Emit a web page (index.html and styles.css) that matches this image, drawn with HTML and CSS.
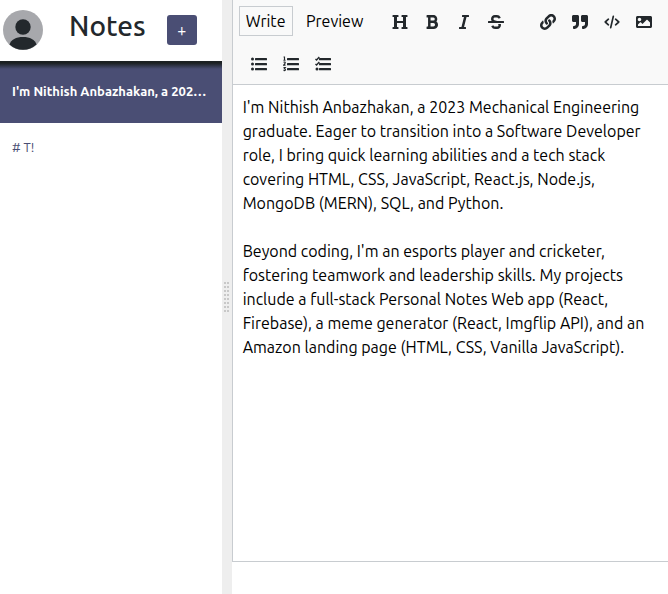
FILE: index.html
```html
<!DOCTYPE html>
<html lang="en">
<head>
<meta charset="utf-8">
<title>Notes</title>
<meta name="viewport" content="width=device-width, initial-scale=1">
<link rel="stylesheet" href="styles.css">
</head>
<body>
<main class="split">
  <section class="sidebar">
    <header class="sidebar-header">
      <svg class="avatar" viewBox="0 0 40 40" role="img" aria-label="User">
        <circle cx="20" cy="20" r="20" fill="#a7a8ac"/>
        <circle cx="20" cy="17" r="7.7" fill="#23282c"/>
        <path d="M6.5 34.5C8 29.5 13 27 20 27s12 2.500 13.500 7.500A20 20 0 0 1 6.500 34.500z" fill="#23282c"/>
      </svg>
      <h1 class="title">Notes</h1>
      <button class="new-note" type="button" aria-label="New note">+</button>
    </header>
    <nav class="notes">
      <a class="note note-selected" href="#note-1">I'm Nithish Anbazhakan, a 2023 Mechanical Engineering graduate.</a>
      <a class="note" href="#note-2"># T!</a>
    </nav>
  </section>
  <div class="gutter">
    <svg class="grip" viewBox="0 0 5 30" fill="#c8c8c8">
      <path d="M0 0h2v2H0zM3 0h2v2H3zM0 4h2v2H0zM3 4h2v2H3zM0 8h2v2H0zM3 8h2v2H3zM0 12h2v2H0zM3 12h2v2H3zM0 16h2v2H0zM3 16h2v2H3zM0 20h2v2H0zM3 20h2v2H3zM0 24h2v2H0zM3 24h2v2H3zM0 28h2v2H0zM3 28h2v2H3z"/>
    </svg>
  </div>
  <section class="editor">
    <div class="toolbar">
      <div class="tabs">
        <button class="tab tab-write tab-selected" type="button">Write</button>
        <button class="tab tab-preview" type="button">Preview</button>
      </div>
      <div class="group">
        <button class="tool" type="button" aria-label="Heading"><svg viewBox="0 0 512 512"><path d="M448 96v320h32a16 16 0 0 1 16 16v32a16 16 0 0 1-16 16H320a16 16 0 0 1-16-16v-32a16 16 0 0 1 16-16h32V288H160v128h32a16 16 0 0 1 16 16v32a16 16 0 0 1-16 16H32a16 16 0 0 1-16-16v-32a16 16 0 0 1 16-16h32V96H32a16 16 0 0 1-16-16V48a16 16 0 0 1 16-16h160a16 16 0 0 1 16 16v32a16 16 0 0 1-16 16h-32v128h192V96h-32a16 16 0 0 1-16-16V48a16 16 0 0 1 16-16h160a16 16 0 0 1 16 16v32a16 16 0 0 1-16 16z"/></svg></button>
        <button class="tool" type="button" aria-label="Bold"><svg viewBox="0 0 384 512"><path d="M333.49 238a122 122 0 0 0 27-65.21C367.87 96.49 308 32 233.42 32H34a16 16 0 0 0-16 16v48a16 16 0 0 0 16 16h31.87v288H34a16 16 0 0 0-16 16v48a16 16 0 0 0 16 16h209.32c70.8 0 134.14-51.75 141-122.4 4.74-48.45-16.39-92.06-50.83-119.6zM145.66 112h87.76a48 48 0 0 1 0 96h-87.76zm87.76 288h-87.76V288h87.76a56 56 0 0 1 0 112z"/></svg></button>
        <button class="tool" type="button" aria-label="Italic"><svg viewBox="0 0 320 512"><path d="M320 48v32a16 16 0 0 1-16 16h-62.76l-80 320H208a16 16 0 0 1 16 16v32a16 16 0 0 1-16 16H16a16 16 0 0 1-16-16v-32a16 16 0 0 1 16-16h62.76l80-320H112a16 16 0 0 1-16-16V48a16 16 0 0 1 16-16h192a16 16 0 0 1 16 16z"/></svg></button>
        <button class="tool" type="button" aria-label="Strikethrough"><svg viewBox="0 0 512 512"><path d="M496 224H293.9l-87.17-26.83A43.55 43.55 0 0 1 219.55 112h66.79A49.89 49.89 0 0 1 331 139.58a16 16 0 0 0 21.46 7.15l42.94-21.47a16 16 0 0 0 7.16-21.46l-.53-1A128 128 0 0 0 287.51 32h-68a123.68 123.68 0 0 0-123 135.64c2 20.89 10.1 39.83 21.78 56.36H16a16 16 0 0 0-16 16v32a16 16 0 0 0 16 16h480a16 16 0 0 0 16-16v-32a16 16 0 0 0-16-16zm-180.24 96A43 43 0 0 1 336 356.45 43.59 43.59 0 0 1 292.45 400h-66.79A49.89 49.89 0 0 1 181 372.42a16 16 0 0 0-21.46-7.15l-42.94 21.47a16 16 0 0 0-7.16 21.46l.53 1A128 128 0 0 0 224.49 480h68a123.68 123.68 0 0 0 123-135.64 114.25 114.25 0 0 0-5.34-24.36z"/></svg></button>
      </div>
      <div class="group">
        <button class="tool" type="button" aria-label="Link"><svg viewBox="0 0 512 512"><path d="M326.612 185.391c59.747 59.809 58.927 155.698.36 214.59-.11.12-.24.25-.36.37l-67.2 67.2c-59.27 59.27-155.699 59.262-214.96 0-59.27-59.26-59.27-155.7 0-214.96l37.106-37.106c9.84-9.84 26.786-3.3 27.294 10.606.648 17.722 3.826 35.527 9.69 52.721 1.986 5.822.567 12.262-3.783 16.612l-13.087 13.087c-28.026 28.026-28.905 73.66-1.155 101.96 28.024 28.579 74.086 28.749 102.325.51l67.2-67.19c28.191-28.191 28.073-73.757 0-101.83-3.701-3.694-7.429-6.564-10.341-8.569a16.037 16.037 0 0 1-6.947-12.606c-.396-10.567 3.348-21.456 11.698-29.806l21.054-21.055c5.521-5.521 14.182-6.199 20.584-1.731a152.482 152.482 0 0 1 20.522 17.197zM467.547 44.449c-59.261-59.262-155.69-59.27-214.96 0l-67.2 67.2c-.12.12-.25.25-.36.37-58.566 58.892-59.387 154.781.36 214.59a152.454 152.454 0 0 0 20.521 17.196c6.402 4.468 15.064 3.789 20.584-1.731l21.054-21.055c8.35-8.35 12.094-19.239 11.698-29.806a16.037 16.037 0 0 0-6.947-12.606c-2.912-2.005-6.64-4.875-10.341-8.569-28.073-28.073-28.191-73.639 0-101.83l67.2-67.19c28.239-28.239 74.3-28.069 102.325.51 27.75 28.3 26.872 73.934-1.155 101.96l-13.087 13.087c-4.35 4.35-5.769 10.79-3.783 16.612 5.864 17.194 9.042 34.999 9.69 52.721.509 13.906 17.454 20.446 27.294 10.606l37.106-37.106c59.271-59.259 59.271-155.699.001-214.959z"/></svg></button>
        <button class="tool" type="button" aria-label="Quote"><svg viewBox="0 0 512 512"><path d="M464 32H336c-26.5 0-48 21.5-48 48v128c0 26.5 21.5 48 48 48h80v64c0 35.3-28.7 64-64 64h-8c-13.3 0-24 10.7-24 24v48c0 13.3 10.7 24 24 24h8c88.4 0 160-71.6 160-160V80c0-26.5-21.5-48-48-48zm-288 0H48C21.5 32 0 53.5 0 80v128c0 26.5 21.5 48 48 48h80v64c0 35.3-28.7 64-64 64h-8c-13.3 0-24 10.7-24 24v48c0 13.3 10.7 24 24 24h8c88.4 0 160-71.6 160-160V80c0-26.5-21.5-48-48-48z"/></svg></button>
        <button class="tool" type="button" aria-label="Code"><svg viewBox="0 0 640 512"><path d="M176 144L50 256l126 112M464 144l126 112-126 112M372 30L268 482" fill="none" stroke="currentColor" stroke-width="68" stroke-linecap="round" stroke-linejoin="round"/></svg></button>
        <button class="tool" type="button" aria-label="Image"><svg viewBox="0 0 512 512"><path d="M464 448H48c-26.51 0-48-21.49-48-48V112c0-26.51 21.49-48 48-48h416c26.51 0 48 21.49 48 48v288c0 26.51-21.49 48-48 48zM112 120c-30.928 0-56 25.072-56 56s25.072 56 56 56 56-25.072 56-56-25.072-56-56-56zM64 384h384V272l-87.515-87.515c-4.686-4.686-12.284-4.686-16.971 0L208 320l-55.515-55.515c-4.686-4.686-12.284-4.686-16.971 0L64 336v48z"/></svg></button>
      </div>
      <div class="group">
        <button class="tool" type="button" aria-label="Bulleted list"><svg viewBox="0 0 512 512"><g id="lines"><rect x="128" y="60" width="384" height="72" rx="16"/><rect x="128" y="220" width="384" height="72" rx="16"/><rect x="128" y="380" width="384" height="72" rx="16"/></g><circle cx="48" cy="96" r="48"/><circle cx="48" cy="256" r="48"/><circle cx="48" cy="416" r="48"/></svg></button>
        <button class="tool" type="button" aria-label="Numbered list"><svg viewBox="0 0 512 512"><use href="#lines"/><path d="M18 32h30v94M14 134h68M16 202q62-22 56 18-6 20-52 70h62M16 368h58l-32 40q36 0 36 30 0 40-62 24" fill="none" stroke="currentColor" stroke-width="36"/></svg></button>
        <button class="tool" type="button" aria-label="Task list"><svg viewBox="0 0 512 512"><use href="#lines"/><path d="M14 94l36 34 88-94M14 254l36 34 88-94" fill="none" stroke="currentColor" stroke-width="46"/><circle cx="64" cy="416" r="48"/></svg></button>
      </div>
    </div>
    <textarea class="text" aria-label="Note text" spellcheck="false">I'm Nithish Anbazhakan, a 2023 Mechanical Engineering graduate. Eager to transition into a Software Developer role, I bring quick learning abilities and a tech stack covering HTML, CSS, JavaScript, React.js, Node.js, MongoDB (MERN), SQL, and Python.

Beyond coding, I'm an esports player and cricketer, fostering teamwork and leadership skills. My projects include a full-stack Personal Notes Web app (React, Firebase), a meme generator (React, Imgflip API), and an Amazon landing page (HTML, CSS, Vanilla JavaScript).</textarea>
  </section>
</main>
</body>
</html>
```
FILE: styles.css
```css
* {
  box-sizing: border-box;
}

body {
  margin: 0;
  background: #fff;
  color: #23282c;
  font-family: Ubuntu, "Noto Sans", sans-serif;
}

button,
textarea {
  font: inherit;
}

.split {
  display: flex;
  height: 100vh;
}

.sidebar {
  flex: 0 0 calc(33.33% - 1px);
  min-width: 0;
}

.sidebar-header {
  display: flex;
  align-items: center;
  height: 61px;
  padding: 0 25px 1px 3px;
}

.avatar {
  width: 40px;
  height: 40px;
}

.title {
  flex: 1;
  margin: 0 0 8px 26px;
  font-family: "Ubuntu Medium", Ubuntu, "Noto Sans", sans-serif;
  font-size: 28px;
  font-weight: 500;
  line-height: 36px;
}

.new-note {
  width: 30px;
  height: 30px;
  padding: 0;
  border: 0;
  border-radius: 3px;
  background: #4a4e74;
  color: #fff;
  font-size: 16px;
}

.note {
  display: block;
  padding: 14px 12px;
  overflow: hidden;
  color: #4a4e74;
  font-size: 13px;
  line-height: 20px;
  text-decoration: none;
  text-overflow: ellipsis;
  white-space: nowrap;
}

.note-selected {
  padding: 20px 12px 22px;
  background: #4a4e74 linear-gradient(#1c2123 2px, #4a4e7400 8px);
  color: #fff;
  font-weight: 700;
}

.gutter {
  display: flex;
  flex: 0 0 10px;
  align-items: center;
  justify-content: center;
  background: #eee;
}

.grip {
  width: 5px;
  height: 30px;
}

.editor {
  display: flex;
  flex: 1;
  flex-direction: column;
  min-width: 0;
  margin-bottom: 32px;
  border: solid #c8ccd0;
  border-width: 0 0 1px 1px;
}

.toolbar {
  display: flex;
  flex-wrap: wrap;
  column-gap: 3px;
  border-bottom: 1px solid #c8ccd0;
  background: #f9f9f9;
}

.tabs {
  display: flex;
  gap: 6px;
  margin: 6px 0 6px 6px;
}

.tab {
  height: 30px;
  padding: 0;
  border: 1px solid transparent;
  background: transparent;
  color: #000;
  font-size: 16px;
}

.tab-write {
  width: 54px;
}

.tab-preview {
  width: 72px;
}

.tab-selected {
  border-color: #c8ccd0;
}

.group {
  display: flex;
  height: 42px;
  padding: 2px 7px 0 0;
  margin-left: 10px;
}

.tool {
  display: flex;
  align-items: center;
  justify-content: center;
  width: 32px;
  padding: 0;
  border: 0;
  background: transparent;
  color: #23282c;
}

.tool svg {
  width: 16px;
  height: 16px;
  fill: currentColor;
}

.text {
  flex: 1;
  padding: 10px;
  border: 0;
  outline: 0;
  background: #fff;
  color: #000;
  font-size: 16px;
  line-height: 24px;
  resize: none;
}
```
